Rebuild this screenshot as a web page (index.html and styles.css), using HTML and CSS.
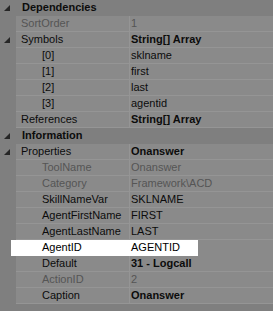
FILE: index.html
```html
<!DOCTYPE html>
<html lang="en">
<head>
    <meta charset="UTF-8">
    <title>Properties</title>
    <link rel="stylesheet" href="styles.css">
</head>
<body>
    <div class="grid">
        <!-- Dependencies -->
        <div class="row category">
            <div class="margin"><svg class="twisty" width="6" height="6" viewBox="0 0 6 6"><polygon points="6,0 6,6 0,6"/></svg></div>
            <div class="cat-name">Dependencies</div>
        </div>
        <div class="row">
            <div class="margin"></div>
            <div class="name dim">SortOrder</div>
            <div class="value dim">1</div>
        </div>
        <div class="row">
            <div class="margin"><svg class="twisty" width="6" height="6" viewBox="0 0 6 6"><polygon points="6,0 6,6 0,6"/></svg></div>
            <div class="name">Symbols</div>
            <div class="value bold">String[] Array</div>
        </div>
        <div class="row">
            <div class="margin"></div>
            <div class="name child">[0]</div>
            <div class="value">sklname</div>
        </div>
        <div class="row">
            <div class="margin"></div>
            <div class="name child">[1]</div>
            <div class="value">first</div>
        </div>
        <div class="row">
            <div class="margin"></div>
            <div class="name child">[2]</div>
            <div class="value">last</div>
        </div>
        <div class="row">
            <div class="margin"></div>
            <div class="name child">[3]</div>
            <div class="value">agentid</div>
        </div>
        <div class="row">
            <div class="margin"></div>
            <div class="name">References</div>
            <div class="value bold">String[] Array</div>
        </div>

        <!-- Information -->
        <div class="row category">
            <div class="margin"><svg class="twisty" width="6" height="6" viewBox="0 0 6 6"><polygon points="6,0 6,6 0,6"/></svg></div>
            <div class="cat-name">Information</div>
        </div>
        <div class="row">
            <div class="margin"><svg class="twisty" width="6" height="6" viewBox="0 0 6 6"><polygon points="6,0 6,6 0,6"/></svg></div>
            <div class="name">Properties</div>
            <div class="value bold">Onanswer</div>
        </div>
        <div class="row">
            <div class="margin"></div>
            <div class="name child dim">ToolName</div>
            <div class="value dim">Onanswer</div>
        </div>
        <div class="row">
            <div class="margin"></div>
            <div class="name child dim">Category</div>
            <div class="value dim">Framework\ACD</div>
        </div>
        <div class="row">
            <div class="margin"></div>
            <div class="name child">SkillNameVar</div>
            <div class="value">SKLNAME</div>
        </div>
        <div class="row">
            <div class="margin"></div>
            <div class="name child">AgentFirstName</div>
            <div class="value">FIRST</div>
        </div>
        <div class="row">
            <div class="margin"></div>
            <div class="name child">AgentLastName</div>
            <div class="value">LAST</div>
        </div>
        <div class="row spot">
            <div class="margin"></div>
            <div class="name child">AgentID</div>
            <div class="value">AGENTID</div>
        </div>
        <div class="row">
            <div class="margin"></div>
            <div class="name child">Default</div>
            <div class="value bold">31 - Logcall</div>
        </div>
        <div class="row">
            <div class="margin"></div>
            <div class="name child dim">ActionID</div>
            <div class="value dim">2</div>
        </div>
        <div class="row">
            <div class="margin"></div>
            <div class="name child">Caption</div>
            <div class="value bold">Onanswer</div>
        </div>
    </div>
</body>
</html>
```

FILE: styles.css
```css
* {
    box-sizing: border-box;
    margin: 0;
    padding: 0;
}

body {
    background-color: #7f7f7f;
    font-family: "Liberation Sans", Arial, sans-serif;
    font-size: 11px;
    color: #0c0c0c;
    width: 273px;
    height: 311px;
    overflow: hidden;
}

.row {
    display: flex;
    height: 16px;
    background-color: #8a8a8a;
}

.margin {
    width: 16px;
    flex: none;
    background-color: #7f7f7f;
    padding: 5px 0 0 4px;
}

.twisty {
    display: block;
    fill: #262626;
}

.name {
    width: 114px;
    flex: none;
    padding-left: 5px;
    line-height: 15px;
    border-bottom: 1px solid #959595;
    border-right: 1px solid #959595;
    white-space: nowrap;
    overflow: hidden;
}

.name.child {
    padding-left: 26px;
}

.value {
    flex: 1;
    padding-left: 1px;
    line-height: 15px;
    border-bottom: 1px solid #959595;
    white-space: nowrap;
}

.dim {
    color: #555555;
}

.bold {
    font-weight: bold;
}

/* category header rows */
.category {
    background-color: #7f7f7f;
}

.cat-name {
    padding-left: 6px;
    font-weight: bold;
    line-height: 15px;
}

/* highlighted row */
.spot {
    background-color: transparent;
}

.spot .margin {
    background: linear-gradient(to right, #7f7f7f 11px, #ffffff 11px);
}

.spot .name {
    background-color: #ffffff;
    border-color: #ffffff;
    color: #000000;
}

.spot .value {
    background: linear-gradient(to right, #ffffff 68px, #8a8a8a 68px);
    border-bottom: none;
    color: #000000;
}
```
